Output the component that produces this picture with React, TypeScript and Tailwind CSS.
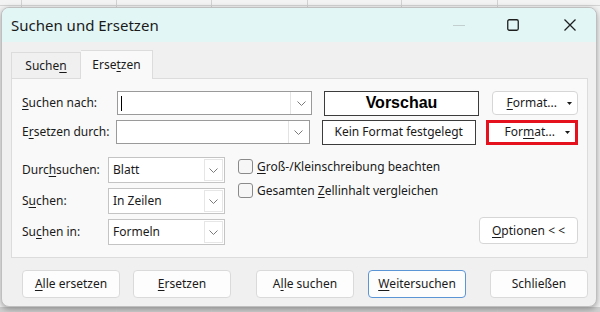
import React from "react";

const font = { fontFamily: '"Noto Sans", "Open Sans", sans-serif' };

function U({ children }: { children: React.ReactNode }) {
  return <span className="underline underline-offset-2 decoration-[1px]">{children}</span>;
}

function Chevron() {
  return (
    <svg width="9" height="5" viewBox="0 0 9 5" fill="none">
      <polyline points="0.5,0.5 4.5,4.5 8.5,0.5" stroke="#7a7a7a" strokeWidth="1" />
    </svg>
  );
}

function Caret() {
  return (
    <svg width="5" height="3" viewBox="0 0 5 3">
      <polygon points="0,0 5,0 2.5,3" fill="#1a1a1a" />
    </svg>
  );
}

function ComboInput({ caret }: { caret?: boolean }) {
  return (
    <div className="w-[195px] h-[24px] bg-white border border-[#9a9a9a] flex items-center">
      <div className="flex-1 pl-[3px]">{caret && <div className="w-px h-[15px] bg-black" />}</div>
      <div className="w-[21px] h-[22px] border-l border-[#e3e3e3] flex items-center justify-center">
        <Chevron />
      </div>
    </div>
  );
}

function Select({ value }: { value: string }) {
  return (
    <div className="w-[117px] h-[26px] bg-white border border-[#c4c4c4] flex items-center">
      <div className="flex-1 pl-[4px] text-[12px] text-[#1a1a1a]">{value}</div>
      <div className="w-[19px] h-[22px] mr-[1px] border border-[#e6e6e6] flex items-center justify-center">
        <Chevron />
      </div>
    </div>
  );
}

function Checkbox({ children }: { children: React.ReactNode }) {
  return (
    <div className="flex items-center gap-[4px] h-[15px]">
      <div className="w-[15px] h-[15px] rounded-[3px] border border-[#8a8a8a] bg-[#f6f6f6]" />
      <span className="text-[12px] text-[#1a1a1a]">{children}</span>
    </div>
  );
}

function Btn({ children, primary }: { children: React.ReactNode; primary?: boolean }) {
  return (
    <div
      className={
        "w-[98px] h-[28px] bg-[#fdfdfd] rounded-[4px] flex items-center justify-center text-[12px] text-[#1a1a1a] " +
        (primary ? "border border-[#5b95d6]" : "border border-[#dadada]")
      }
    >
      {children}
    </div>
  );
}

export default function App() {
  return (
    <div className="w-[600px] h-[312px] relative overflow-hidden bg-[#f3f3f3]" style={font}>
      {/* spreadsheet behind */}
      <div className="absolute left-0 right-0 top-[5px] h-px bg-[#d4d4d4]" />
      <div className="absolute left-0 right-0 bottom-0 h-[5px] bg-[#d0d0d0]" />
      {[21, 116, 211, 307, 401, 497].map((x) => (
        <div key={x} className="absolute top-0 bottom-0 w-px bg-[#d2d2d2]" style={{ left: x }} />
      ))}

      {/* dialog window */}
      <div className="absolute left-[1px] top-[7px] w-[596px] h-[300px] rounded-[8px] bg-[#f0f0f0] border border-[#bfbfbf] shadow-[0_2px_6px_rgba(0,0,0,0.35)] overflow-hidden flex flex-col">
        <div className="h-[34px] bg-[#e2f6f6] flex items-center shrink-0">
          <div className="pl-[9px] text-[15px] text-[#1a1a1a] flex-1">Suchen und Ersetzen</div>
          <div className="w-[12px] h-px bg-[#c3cfcf] mr-[42px]" />
          <svg width="12" height="12" viewBox="0 0 12 12" className="mr-[45px]">
            <rect x="0.75" y="0.75" width="10.5" height="10.5" rx="1.5" fill="none" stroke="#1f1f1f" strokeWidth="1.3" />
          </svg>
          <svg width="12" height="12" viewBox="0 0 12 12" className="mr-[20px]">
            <path d="M0.5 0.5 L11.5 11.5 M11.5 0.5 L0.5 11.5" stroke="#1f1f1f" strokeWidth="1.3" />
          </svg>
        </div>

        <div className="pl-[9px] pr-[8px] pt-[8px] flex flex-col">
          {/* tabs */}
          <div className="flex items-end h-[28px] text-[12px] text-[#1a1a1a]">
            <div className="w-[70px] h-[26px] border border-[#dcdcdc] border-b-0 flex items-center justify-center pt-[1px]">
              <span>
                Suche<U>n</U>
              </span>
            </div>
            <div className="w-[72px] h-[29px] -mb-px bg-[#f9f9f9] border border-[#dcdcdc] border-b-0 border-l-0 flex items-center justify-center relative z-10">
              <span>
                Erse<U>t</U>zen
              </span>
            </div>
          </div>

          {/* panel */}
          <div className="h-[180px] bg-[#f9f9f9] border border-[#dcdcdc] pl-[10px] pr-[9px] pt-[12px] text-[12px] text-[#1a1a1a] flex flex-col">
            <div className="flex flex-col gap-[5px]">
              <div className="flex items-center h-[24px]">
                <div className="w-[95px]">
                  <U>S</U>uchen nach:
                </div>
                <ComboInput caret />
                <div className="ml-[12px] w-[155px] h-[25px] bg-white border border-[#3c3c3c] flex items-center justify-center text-[16px] font-bold text-black" style={{ fontFamily: '"Liberation Sans", Arial, sans-serif' }}>
                  Vorschau
                </div>
                <div className="ml-[13px] w-[86px] h-[24px] bg-white border border-[#d6d6d6] rounded-[4px] flex items-center justify-end pr-[5px] gap-[10px]">
                  <span>
                    <U>F</U>ormat...
                  </span>
                  <Caret />
                </div>
              </div>
              <div className="flex items-center h-[24px]">
                <div className="w-[95px]">
                  E<U>r</U>setzen durch:
                </div>
                <ComboInput />
                <div className="ml-[12px] w-[155px] h-[25px] bg-white border border-[#3c3c3c] flex items-center justify-center">
                  Kein Format festgelegt
                </div>
                <div className="ml-[10px] w-[93px] h-[25px] bg-white border-[3px] border-[#e5121d] flex items-center justify-end pr-[5px] gap-[10px]">
                  <span>
                    For<U>m</U>at...
                  </span>
                  <Caret />
                </div>
              </div>
            </div>

            <div className="flex mt-[13px]">
              <div className="flex flex-col gap-[5px]">
                <div className="flex items-center">
                  <div className="w-[86px]">
                    Durc<U>h</U>suchen:
                  </div>
                  <Select value="Blatt" />
                </div>
                <div className="flex items-center">
                  <div className="w-[86px]">
                    S<U>u</U>chen:
                  </div>
                  <Select value="In Zeilen" />
                </div>
                <div className="flex items-center">
                  <div className="w-[86px]">
                    Su<U>c</U>hen in:
                  </div>
                  <Select value="Formeln" />
                </div>
              </div>
              <div className="ml-[13px] flex-1 flex flex-col">
                <div className="flex flex-col gap-[9px] pt-[2px]">
                  <Checkbox>
                    <U>G</U>roß-/Kleinschreibung beachten
                  </Checkbox>
                  <Checkbox>
                    Gesamten <U>Z</U>ellinhalt vergleichen
                  </Checkbox>
                </div>
                <div className="mt-auto self-end mb-[1px] w-[99px] h-[27px] bg-white border border-[#d6d6d6] rounded-[4px] flex items-center justify-center">
                  <span>
                    <U>O</U>ptionen &lt; &lt;
                  </span>
                </div>
              </div>
            </div>
          </div>

          {/* bottom buttons */}
          <div className="flex mt-[12px] pl-[11px]">
            <Btn>
              <U>A</U>lle ersetzen
            </Btn>
            <div className="ml-[13px]">
              <Btn>
                <U>E</U>rsetzen
              </Btn>
            </div>
            <div className="ml-[25px]">
              <Btn>
                A<U>l</U>le suchen
              </Btn>
            </div>
            <div className="ml-[14px]">
              <Btn primary>
                <U>W</U>eitersuchen
              </Btn>
            </div>
            <div className="ml-[24px]">
              <Btn>Schließen</Btn>
            </div>
          </div>
        </div>
      </div>
    </div>
  );
}
